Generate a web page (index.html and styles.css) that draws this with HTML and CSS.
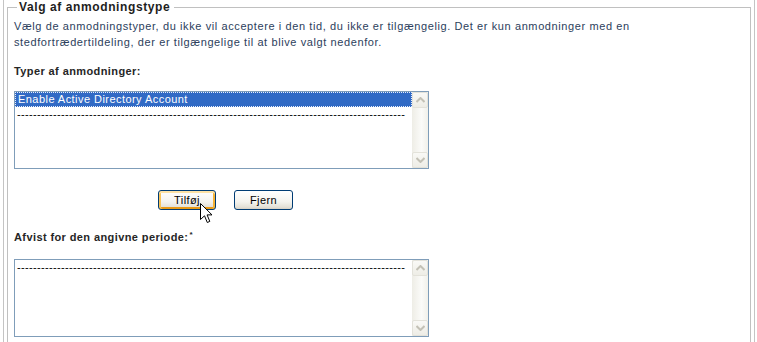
FILE: index.html
```html
<!DOCTYPE html>
<html lang="da">
<head>
<meta charset="utf-8">
<title>Valg af anmodningstype</title>
<link rel="stylesheet" href="styles.css">
</head>
<body>
<div class="outer">
  <fieldset class="fs">
    <legend class="legend">Valg af anmodningstype</legend>
    <p class="intro">Vælg de anmodningstyper, du ikke vil acceptere i den tid, du ikke er tilgængelig. Det er kun anmodninger med en<br>stedfortrædertildeling, der er tilgængelige til at blive valgt nedenfor.</p>
    <div class="label label-first">Typer af anmodninger:</div>
    <div class="listbox">
      <div class="options">
        <div class="opt sel">Enable Active Directory Account</div>
        <div class="opt dash">-------------------------------------------------------------------------------------------------</div>
      </div>
      <div class="sb">
        <div class="sb-btn"><svg width="9" height="6" viewBox="0 0 9 6"><path d="M0.5 5 L4.5 1 L8.5 5" fill="none" stroke="#c3c1b6" stroke-width="2"/></svg></div>
        <div class="sb-track"></div>
        <div class="sb-btn"><svg width="9" height="6" viewBox="0 0 9 6"><path d="M0.5 1 L4.5 5 L8.5 1" fill="none" stroke="#c3c1b6" stroke-width="2"/></svg></div>
      </div>
    </div>
    <div class="buttons">
      <button class="btn btn-hover" type="button">Tilføj</button>
      <button class="btn" type="button">Fjern</button>
    </div>
    <div class="label label-second">Afvist for den angivne periode:<span class="req">*</span></div>
    <div class="listbox">
      <div class="options">
        <div class="opt dash">-------------------------------------------------------------------------------------------------</div>
      </div>
      <div class="sb">
        <div class="sb-btn"><svg width="9" height="6" viewBox="0 0 9 6"><path d="M0.5 5 L4.5 1 L8.5 5" fill="none" stroke="#c3c1b6" stroke-width="2"/></svg></div>
        <div class="sb-track"></div>
        <div class="sb-btn"><svg width="9" height="6" viewBox="0 0 9 6"><path d="M0.5 1 L4.5 5 L8.5 1" fill="none" stroke="#c3c1b6" stroke-width="2"/></svg></div>
      </div>
    </div>
  </fieldset>
  <svg class="cursor" width="14" height="22" viewBox="0 0 14 22"><path d="M0.5 0.5 L0.5 16.5 L4.5 12.8 L7.3 19.5 L9.8 18.4 L7.1 11.9 L12 11.9 Z" fill="#fff" stroke="#000" stroke-width="1" stroke-linejoin="miter"/></svg>
</div>
</body>
</html>
```
FILE: styles.css
```css
html, body {
  margin: 0;
  padding: 0;
  background: #fff;
}
body {
  font-family: "Liberation Sans", Arial, sans-serif;
  font-size: 11px;
  width: 757px;
  height: 342px;
  overflow: hidden;
}
.outer {
  position: relative;
  margin-left: 3px;
  width: 752px;
  height: 342px;
  overflow: hidden;
  border-left: 1px solid #c4c4c4;
  border-right: 1px solid #c4c4c4;
  padding-left: 3px;
  box-sizing: border-box;
}
.fs {
  margin: 0;
  width: 744px;
  box-sizing: border-box;
  border: 1px solid #c0c0c0;
  border-bottom: 0;
  padding: 4px 6px 7px 6px;
  min-inline-size: 0;
}
.legend {
  margin-left: 3px;
  padding: 0 4px 0 2px;
  font-weight: bold;
  font-size: 12px;
  letter-spacing: 0.6px;
  line-height: 14px;
  color: #1e1e1e;
}
.intro {
  margin: 0;
  line-height: 16px;
  color: #2c3e5c;
  letter-spacing: 0.6px;
  white-space: nowrap;
}
.label {
  font-weight: bold;
  color: #262626;
  line-height: 16px;
  letter-spacing: 0.4px;
}
.label-first {
  margin-top: 13px;
}
.label-second {
  margin-top: 17px;
}
.req {
  font-size: 8px;
  vertical-align: 4px;
  margin-left: 1px;
}
.listbox {
  display: flex;
  width: 415px;
  height: 78px;
  box-sizing: border-box;
  border: 1px solid #7f9db9;
  margin-top: 12px;
  background: #fff;
}
.listbox:last-child {
  margin-top: 14px;
}
.options {
  flex: 1;
  min-width: 0;
  overflow: hidden;
}
.opt {
  height: 15px;
  line-height: 15px;
  padding-left: 3px;
  white-space: nowrap;
  overflow: hidden;
  color: #000;
}
.sel {
  background: #316ac5;
  color: #fff;
  letter-spacing: 0.45px;
  outline: 1px dotted #e8eefa;
  outline-offset: -1px;
}
.dash {
  padding-left: 2px;
  letter-spacing: 0.34px;
  width: 390px;
}
.sb {
  width: 16px;
  display: flex;
  flex-direction: column;
  background: linear-gradient(to right, #eeede6, #fbfbf9 60%, #f1f0ea);
}
.sb-btn {
  height: 16px;
  box-sizing: border-box;
  border: 1px solid #e3e2da;
  border-radius: 2px;
  background: linear-gradient(#f9f9f6, #eeede6);
  display: flex;
  align-items: center;
  justify-content: center;
}
.sb-track {
  flex: 1;
}
.buttons {
  display: flex;
  gap: 18px;
  margin-top: 21px;
  margin-left: 144px;
}
.btn {
  height: 20px;
  width: 58px;
  box-sizing: border-box;
  border: 1px solid #003c74;
  border-radius: 3px;
  background: linear-gradient(#ffffff, #f4f3ee 60%, #e3e0d6 90%, #d6d0c5);
  font-family: "Liberation Sans", Arial, sans-serif;
  font-size: 11px;
  letter-spacing: 0.4px;
  color: #000;
  padding: 0;
  margin: 0;
}
.btn + .btn {
  width: 59px;
}
.btn-hover {
  box-shadow: inset 0 2px 0 #fde2a6, inset 2px 0 0 #f9c45a, inset -2px 0 0 #f5b235, inset 0 -2px 0 #e99a17;
}
.cursor {
  position: absolute;
  left: 196px;
  top: 203px;
}
```
